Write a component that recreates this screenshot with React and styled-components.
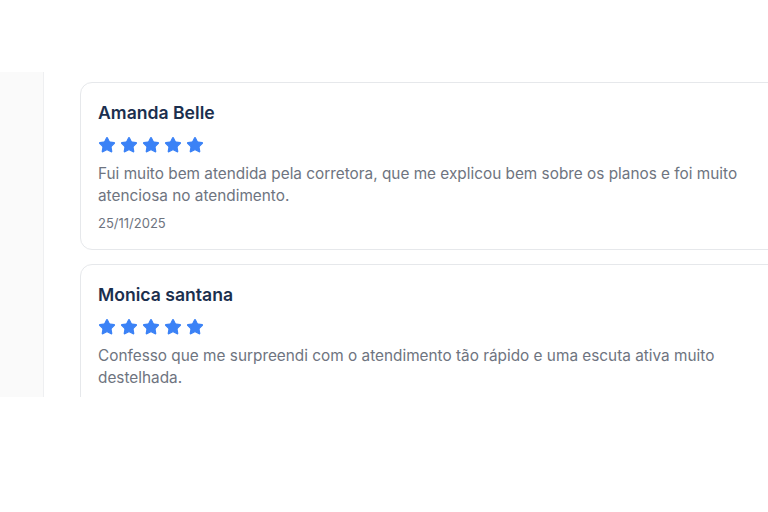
import React from 'react'
import styled, { createGlobalStyle } from 'styled-components'
import { Star } from 'lucide-react'

const GlobalStyle = createGlobalStyle`
  html, body {
    margin: 0;
    padding: 0;
    background: #ffffff;
    font-family: Inter, "Noto Sans", sans-serif;
  }
`

const Page = styled.div`
  width: 768px;
  height: 512px;
  padding-top: 72px;
  box-sizing: border-box;
  background: #ffffff;
  overflow: hidden;
`

const Frame = styled.div`
  display: flex;
  height: 325px;
  overflow: hidden;
`

const Sidebar = styled.aside`
  flex: 0 0 44px;
  background: #fafafa;
  border-right: 1px solid #eeeff1;
  box-sizing: border-box;
`

const Main = styled.main`
  flex: 1;
  display: flex;
  flex-direction: column;
  gap: 14px;
  padding: 10px 0 0 36px;
  min-width: 0;
`

const Card = styled.article`
  width: 720px;
  flex-shrink: 0;
  box-sizing: border-box;
  border: 1px solid #e6e8eb;
  border-radius: 12px;
  background: #ffffff;
  padding: 18px 17px 17px 17px;
  display: flex;
  flex-direction: column;
`

const Name = styled.h3`
  margin: 0;
  font-size: 17.6px;
  line-height: 24px;
  font-weight: 600;
  color: #1b2f4e;
`

const Stars = styled.div`
  display: flex;
  gap: 4px;
  margin-top: 11px;
  height: 18px;
`

const Comment = styled.p`
  margin: 9px 0 0;
  font-size: 15.35px;
  line-height: 22px;
  color: #6e7480;
`

const DateText = styled.span`
  margin-top: 7px;
  font-size: 13px;
  line-height: 18px;
  color: #6e7480;
`

const reviews = [
  {
    name: 'Amanda Belle',
    text: 'Fui muito bem atendida pela corretora, que me explicou bem sobre os planos e foi muito atenciosa no atendimento.',
    date: '25/11/2025',
  },
  {
    name: 'Monica santana',
    text: 'Confesso que me surpreendi com o atendimento tão rápido e uma escuta ativa muito destelhada.',
    date: '25/11/2025',
  },
]

const Review = ({ name, text, date }) => (
  <Card>
    <Name>{name}</Name>
    <Stars>
      {[0, 1, 2, 3, 4].map((i) => (
        <Star key={i} size={18} color="#3b82f6" fill="#3b82f6" strokeWidth={1.5} />
      ))}
    </Stars>
    <Comment>{text}</Comment>
    <DateText>{date}</DateText>
  </Card>
)

export default function App() {
  return (
    <>
      <GlobalStyle />
      <Page>
        <Frame>
          <Sidebar />
          <Main>
            {reviews.map((r) => (
              <Review key={r.name} {...r} />
            ))}
          </Main>
        </Frame>
      </Page>
    </>
  )
}
